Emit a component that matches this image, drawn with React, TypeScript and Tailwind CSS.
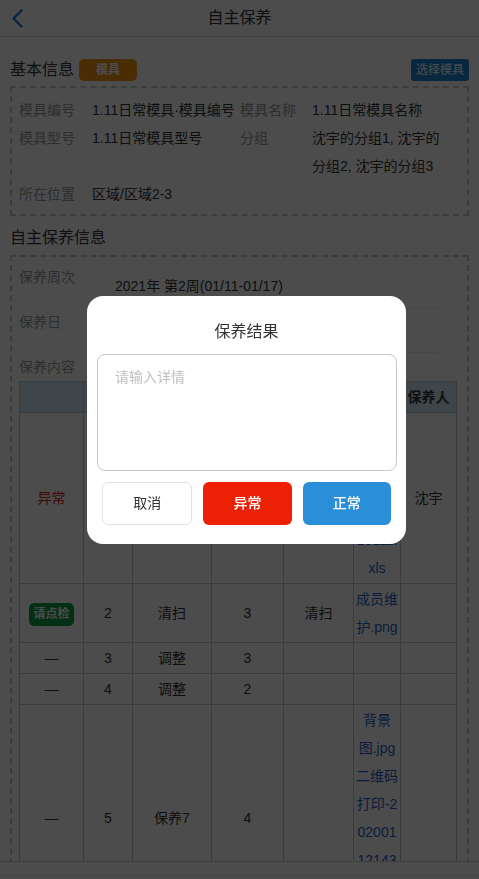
import { useState } from "react";

type Row = {
  status: "abnormal" | "check" | "none";
  no: string;
  item: string;
  std: string;
  method: string;
  files: string[];
  person: string;
};

const rows: Row[] = [
  { status: "abnormal", no: "1", item: "点检", std: "1", method: "点检", files: ["模具保养记录导入模板20210111.xls"], person: "沈宇" },
  { status: "check", no: "2", item: "清扫", std: "3", method: "清扫", files: ["成员维护.png"], person: "" },
  { status: "none", no: "3", item: "调整", std: "3", method: "", files: [], person: "" },
  { status: "none", no: "4", item: "调整", std: "2", method: "", files: [], person: "" },
  { status: "none", no: "5", item: "保养7", std: "4", method: "", files: ["背景图.jpg", "二维码打印-2020011214305812.png"], person: "" },
];

const InfoRow = ({ label, value }: { label: string; value: string }) => (
  <div className="flex">
    <div className="w-[91px] shrink-0 leading-[28px] text-[#999]">{label}</div>
    <div className="mr-[16px] flex-1 border-b border-[#eee] pb-[7px] pl-[5px] pt-[9px] leading-[28px]">{value}</div>
  </div>
);

const App = () => {
  const [detail, setDetail] = useState("");

  return (
    <div className="relative h-screen overflow-hidden bg-white font-['Liberation_Sans','Noto_Sans_CJK_SC',sans-serif] text-[14px] text-[#333]">
      <header className="flex h-[37px] items-center border-b border-[#dcdcdc]">
        <div className="flex w-[40px] items-center pl-[11px]">
          <svg width="12" height="19" viewBox="0 0 12 19" fill="none">
            <path d="M10.5 1.5 L2.5 9.5 L10.5 17.5" stroke="#1f6fd6" strokeWidth="2.2" strokeLinecap="round" strokeLinejoin="round" />
          </svg>
        </div>
        <h1 className="flex-1 text-center text-[16px]">自主保养</h1>
        <div className="w-[40px]" />
      </header>

      <main className="px-[10px]">
        <div className="mt-[22px] flex h-[22px] items-center justify-between">
          <div className="flex items-center gap-[5px]">
            <span className="text-[16px]">基本信息</span>
            <span className="flex h-[22px] w-[58px] items-center justify-center rounded-[5px] bg-[#f39c12] text-[12px] font-bold text-white">
              模具
            </span>
          </div>
          <button className="h-[22px] w-[58px] rounded-[3px] bg-[#1e88d6] text-[12px] text-white">选择模具</button>
        </div>

        <div className="mt-[5px] border-2 border-dashed border-[#c8c8c8] pb-[6px] pl-[7px] pt-[8px]">
          <div className="grid grid-cols-[73px_148px_72px_136px] leading-[28px]">
            <div className="text-[#999]">模具编号</div>
            <div>1.11日常模具·模具编号</div>
            <div className="text-[#999]">模具名称</div>
            <div>1.11日常模具名称</div>
            <div className="text-[#999]">模具型号</div>
            <div>1.11日常模具型号</div>
            <div className="text-[#999]">分组</div>
            <div>沈宇的分组1, 沈宇的分组2, 沈宇的分组3</div>
            <div className="text-[#999]">所在位置</div>
            <div>区域/区域2-3</div>
          </div>
        </div>

        <div className="mt-[8px] text-[16px] leading-[28px]">自主保养信息</div>

        <div className="mt-[3px] h-[700px] border-2 border-dashed border-[#c8c8c8] pl-[7px] pr-[12px] pt-[6px]">
          <InfoRow label="保养周次" value="2021年 第2周(01/11-01/17)" />
          <InfoRow label="保养日" value="2021-01-11" />
          <div className="leading-[28px] text-[#999]">保养内容</div>

          <table className="w-[437px] table-fixed border-collapse text-center leading-[28px]">
            <colgroup>
              <col className="w-[64px]" />
              <col className="w-[49px]" />
              <col className="w-[79px]" />
              <col className="w-[72px]" />
              <col className="w-[70px]" />
              <col className="w-[47px]" />
              <col className="w-[56px]" />
            </colgroup>
            <thead>
              <tr className="bg-[#d3eaf7] font-bold">
                <th className="border border-[#bcc8da] py-[1px]"></th>
                <th className="border border-[#bcc8da] py-[1px]">序号</th>
                <th className="border border-[#bcc8da] py-[1px]">保养项目</th>
                <th className="border border-[#bcc8da] py-[1px]">保养标准</th>
                <th className="border border-[#bcc8da] py-[1px]">保养方法</th>
                <th className="border border-[#bcc8da] py-[1px]">附件</th>
                <th className="border border-[#bcc8da] py-[1px]">保养人</th>
              </tr>
            </thead>
            <tbody>
              {rows.map((r) => (
                <tr key={r.no}>
                  <td className="border border-[#bcc8da] py-[1px]">
                    {r.status === "abnormal" && <span className="text-[#d41c1c]">异常</span>}
                    {r.status === "check" && (
                      <span className="inline-flex h-[23px] w-[45px] items-center justify-center rounded-[5px] bg-[#0aa046] align-middle text-[12px] font-bold leading-none text-white">
                        请点检
                      </span>
                    )}
                    {r.status === "none" && "—"}
                  </td>
                  <td className="border border-[#bcc8da] py-[1px]">{r.no}</td>
                  <td className="border border-[#bcc8da] py-[1px]">{r.item}</td>
                  <td className="border border-[#bcc8da] py-[1px]">{r.std}</td>
                  <td className="border border-[#bcc8da] py-[1px]">{r.method}</td>
                  <td className="border border-[#bcc8da] px-[1px] py-[1px] break-all text-[#1f5fc8]">
                    {r.files.map((f) => (
                      <div key={f}>{f}</div>
                    ))}
                  </td>
                  <td className="border border-[#bcc8da] py-[1px]">{r.person}</td>
                </tr>
              ))}
            </tbody>
          </table>
        </div>
      </main>

      <footer className="fixed bottom-0 left-0 right-0 h-[18px] border-t border-[#d0d0d0] bg-white">
        <div className="h-[14px] border-b border-[#e6e6e6]" />
      </footer>

      <div className="fixed inset-0 bg-black/70">
        <div className="absolute left-[87px] top-[296px] w-[319px] rounded-[16px] bg-white pb-[19px] pt-[24px]">
          <div className="text-center text-[16px] leading-[24px] text-[#333]">保养结果</div>
          <textarea
            value={detail}
            onChange={(e) => setDetail(e.target.value)}
            placeholder="请输入详情"
            className="ml-[10px] mt-[10px] block h-[117px] w-[300px] resize-none rounded-[8px] border border-[#c8c8c8] px-[17px] pt-[12px] text-[14px] leading-[20px] outline-none placeholder:text-[#c0c0c0]"
          />
          <div className="mt-[11px] flex gap-[11px] px-[15px]">
            <button className="h-[43px] flex-1 rounded-[6px] border border-[#e3e3e3] bg-white text-[14px] text-[#333]">取消</button>
            <button className="h-[43px] flex-1 rounded-[6px] bg-[#eb2005] text-[14px] font-medium text-white">异常</button>
            <button className="h-[43px] flex-1 rounded-[6px] bg-[#2a8fd8] text-[14px] font-medium text-white">正常</button>
          </div>
        </div>
      </div>
    </div>
  );
};

export default App;
